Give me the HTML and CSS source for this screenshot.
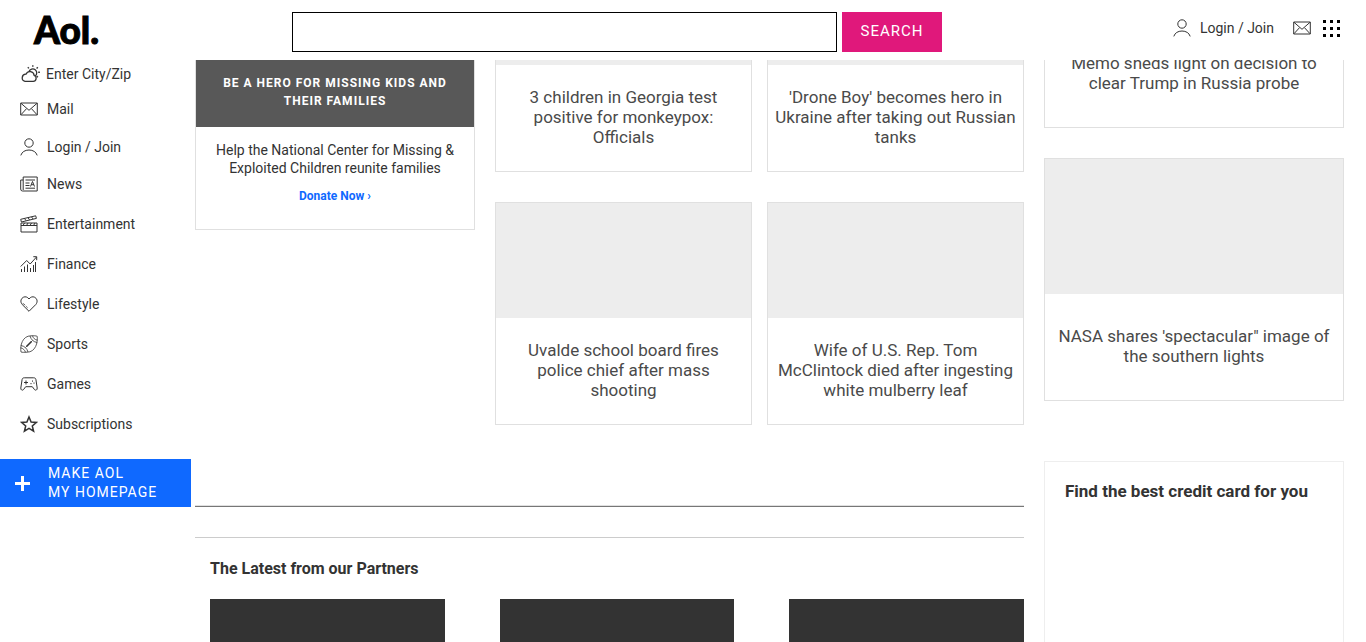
FILE: index.html
```html
<!DOCTYPE html>
<html lang="en">
<head>
<meta charset="utf-8">
<title>Aol.</title>
<link rel="stylesheet" href="styles.css">
</head>
<body>
<svg class="sprite" aria-hidden="true">
  <symbol id="i-user" viewBox="0 0 18 18"><circle cx="9" cy="5" r="4.2"/><path d="M.8 17.4c1-3.400 4.200-5.400 8.200-5.400s7.200 2 8.200 5.400"/></symbol>
  <symbol id="i-mail" viewBox="0 0 18 14"><path d="M.7 1h16.600v12H.7zM1 1.300l8 7 8-7M1 12.700l5.500-6M17 12.700l-5.500-6"/></symbol>
</svg>
<header class="header">
  <a class="logo" href="#">Aol.</a>
  <form class="search" role="search">
    <input class="search-box" type="text" aria-label="Search the web">
    <button class="search-button" type="button">SEARCH</button>
  </form>
  <div class="account">
    <a class="account-link" href="#"><svg class="icon-user"><use href="#i-user"/></svg>Login / Join</a>
    <a class="account-mail" href="#" aria-label="Mail"><svg class="icon-mail"><use href="#i-mail"/></svg></a>
    <button class="apps" type="button" aria-label="Apps"><svg class="icon-apps" viewBox="0 0 17 17"><path d="M0 0h3v3H0zM7 0h3v3H7zM14 0h3v3h-3zM0 7h3v3H0zM7 7h3v3H7zM14 7h3v3h-3zM0 14h3v3H0zM7 14h3v3H7zM14 14h3v3h-3z"/></svg></button>
  </div>
</header>
<div class="page">
  <aside class="sidebar">
    <nav class="menu">
      <a class="item weather" href="#"><svg class="icon-weather" viewBox="0 0 20 18"><path d="M5 16.300h8.200a3 3 0 0 0 1-5.800 4.300 4.300 0 0 0-8.200-1.300 3.600 3.600 0 0 0-1 7.100zM9 6.500a4 4 0 1 1 6 4.700" stroke-width="1.300"/><path d="M12.800.2v1.600M7.800 2.200l1.100 1.200M17.800 2.200l-1.200 1.200M18.200 7.300h1.700M16.600 11l1.300 1.200" stroke-width="1.400"/></svg>Enter City/Zip</a>
      <a class="item mail" href="#"><svg class="icon-mail"><use href="#i-mail"/></svg>Mail</a>
      <a class="item login" href="#"><svg class="icon-user"><use href="#i-user"/></svg>Login / Join</a>
      <a class="item" href="#"><svg class="icon" viewBox="0 0 18 18"><path d="M3.200 2h14v14H2.500Q.7 16 .7 14V5h2.500zM3.200 5v10M5.500 5h9.500M5.500 8h4M5.500 10.500h4M5.500 13.200h9.500M10.500 11.500l2-5 2 5M11.300 9.700h2.500"/></svg>News</a>
      <a class="item" href="#"><svg class="icon" viewBox="0 0 18 18"><path d="M1 8h16v9H1zM1 10.500h16M3 10.500l1.500-2.500M6.500 10.500L8 8M10 10.500l1.500-2.500M13.500 10.500L15 8M.7 4.300L15.700.8l.7 2.600L1.400 7zM4.500 3.500l1.600 2.200M8 2.700l1.600 2.200M11.500 1.900l1.600 2.100"/></svg>Entertainment</a>
      <a class="item" href="#"><svg class="icon" viewBox="0 0 18 18"><path d="M.7 11.500l6-6 3.500 3.500 6.300-7M13.300 1.700h3.400v3.500M1.500 14v3M4.500 11.500V17M7.500 9.500V17M10.500 13v4M13.500 10v7M15.500 7v10"/></svg>Finance</a>
      <a class="item" href="#"><svg class="icon" viewBox="0 0 18 18"><path d="M9 16.300L2.200 9.500C-2 4.500 5-1.500 9 4c4-5.500 11 .5 6.800 5.500zM3 8.300l2 2M6.300 11.500l1.200 1.200"/></svg>Lifestyle</a>
      <a class="item" href="#"><svg class="icon" viewBox="0 0 18 18"><path d="M1 17C-.2 10.500 2.500.8 11 .8c3-.2 5 0 6.200.5C18 7.500 15.500 17.200 7 17.200c-3 .2-5 .2-6-.2zM10 1c1 3.500 3.500 6 7.200 6.500M12.500.8c.6 2.200 2.200 3.800 4.800 4.400M.8 10.500c3.800.5 6.200 3 7.200 6.500M.7 12.800c2.500.7 4 2.200 4.800 4.400M5.500 12.500l7-7" stroke-width=".8"/><path d="M6.500 11.500l5-5" stroke-width="1.600"/></svg>Sports</a>
      <a class="item" href="#"><svg class="icon" viewBox="0 0 18 18"><path d="M4.300 2.800h9.400c1.400 0 2 .7 2.200 1.700l1.300 8.500c.2 2-1.600 2.800-2.700 1.600l-2.200-2.900H5.700l-2.200 2.900c-1.100 1.200-2.900.4-2.700-1.600L2.100 4.500c.2-1 .8-1.700 2.200-1.700zM4 7.500h4M6 5.500v4M11 8v1.200M12.500 5.500v1.200M14 7.500v1.200"/></svg>Games</a>
      <a class="item" href="#"><svg class="icon" viewBox="0 0 18 18"><path d="M9 2l2.100 5 5.300.4-4.100 3.500 1.300 5.300L9 13.400l-4.600 2.800 1.300-5.300-4.100-3.500L6.900 7z" stroke-width="1.500"/></svg>Subscriptions</a>
    </nav>
    <button class="homepage" type="button"><svg class="icon-plus" viewBox="0 0 15 15"><path d="M6 0h3v6h6v3H9v6H6V9H0V6h6z"/></svg><span>MAKE AOL<br>MY HOMEPAGE</span></button>
  </aside>
  <main class="main">
    <div class="feed">
      <section class="hero">
        <h2 class="hero-title">BE A HERO FOR MISSING KIDS AND THEIR FAMILIES</h2>
        <p class="hero-text">Help the National Center for Missing &amp; Exploited Children reunite families</p>
        <a class="hero-link" href="#">Donate Now ›</a>
      </section>
      <div class="stories">
        <article class="card"><div class="thumb thumb-short"></div><a class="headline" href="#">3 children in Georgia test positive for monkeypox:<br>Officials</a></article>
        <article class="card"><div class="thumb thumb-short"></div><a class="headline" href="#">'Drone Boy' becomes hero in Ukraine after taking out Russian tanks</a></article>
        <article class="card"><div class="thumb"></div><a class="headline" href="#">Uvalde school board fires<br>police chief after mass<br>shooting</a></article>
        <article class="card"><div class="thumb"></div><a class="headline" href="#">Wife of U.S. Rep. Tom McClintock died after ingesting white mulberry leaf</a></article>
      </div>
    </div>
    <section class="partners">
      <h2 class="partners-title">The Latest from our Partners</h2>
      <div class="tiles"><div class="tile"></div><div class="tile"></div><div class="tile"></div></div>
    </section>
  </main>
  <aside class="rail">
    <article class="card"><a class="headline headline-first" href="#">Memo sheds light on decision to clear Trump in Russia probe</a></article>
    <article class="card"><div class="thumb thumb-rail"></div><a class="headline headline-rail" href="#">NASA shares 'spectacular" image of the southern lights</a></article>
    <section class="offer"><h2 class="offer-title">Find the best credit card for you</h2></section>
  </aside>
</div>
</body>
</html>
```
FILE: styles.css
```css
* { box-sizing: border-box; }
body { margin: 0; background: #fff; color: #333; font: 14px/18px Roboto, "Liberation Sans", sans-serif; }
a { color: inherit; text-decoration: none; }
h2, p { margin: 0; }
button { border: 0; padding: 0; font: inherit; cursor: pointer; }
svg { flex: none; fill: none; stroke: #333; stroke-width: 1; }
.sprite { display: none; }

.header { position: fixed; top: 0; left: 0; right: 0; z-index: 2; display: flex; align-items: center; height: 60px; padding: 0 26px 0 34px; background: #fff; }
.logo { flex: none; width: 258px; color: #000; font: 900 37px/40px Lato, sans-serif; -webkit-text-stroke: 1px #000; }
.search { display: flex; flex: 0 1 650px; gap: 5px; height: 40px; margin-top: 4px; }
.search-box { flex: 1; min-width: 0; padding: 0 10px; border: 1px solid #000; border-radius: 0; font: inherit; font-size: 16px; }
.search-button { width: 100px; padding-bottom: 2px; background: #e0187b; color: #fff; font-size: 15px; letter-spacing: 1px; }
.account { display: flex; align-items: center; margin-left: auto; padding-bottom: 4px; }
.account-link { display: flex; align-items: center; gap: 9px; margin-right: 19px; }
.account-mail { display: flex; margin-right: 12px; }
.apps { display: flex; background: none; }
.icon-user, .icon { width: 18px; height: 18px; }
.icon-mail { width: 18px; height: 14px; }
.icon-weather { width: 20px; height: 18px; }
.icon-apps { width: 17px; height: 17px; fill: #000; stroke: none; }
.icon-plus { width: 15px; height: 15px; fill: #fff; stroke: none; }

.page { display: grid; grid-template-columns: 195px minmax(0, 1fr) 320px; min-height: 100vh; padding-right: 22px; }
.sidebar { padding-top: 60px; }
.menu { display: flex; flex-direction: column; }
.item { display: flex; align-items: center; gap: 9px; height: 40px; padding-left: 20px; }
.weather { gap: 6px; height: 28px; }
.mail { height: 42px; }
.login { height: 34px; }
.homepage { display: flex; align-items: center; gap: 18px; width: 191px; height: 48px; margin-top: 15px; padding-left: 15px; background: #0f69ff; color: #fff; line-height: 19px; letter-spacing: 1px; text-align: left; }

.main { display: flex; flex-direction: column; }
.feed { display: grid; grid-template-columns: 280px minmax(0, 1fr); gap: 20px; align-items: start; padding-bottom: 81px; border-bottom: 1px solid #777; box-shadow: inset 0 -1px #e0e0e0; }
.hero { padding-bottom: 24px; border: 1px solid #e0e0e0; border-top: 0; text-align: center; }
.hero-title { padding: 74px 20px 17px; background: #585858; color: #fff; font-size: 12px; line-height: 18px; letter-spacing: 1px; }
.hero-text { padding: 14px 20px 10px; }
.hero-link { display: block; color: #0f69ff; font-size: 12px; font-weight: 700; }
.stories { display: grid; grid-template-columns: 1fr 1fr; gap: 30px 15px; }
.card { border: 1px solid #e0e0e0; }
.thumb { height: 115px; background: #ededed; }
.thumb-short { height: 64px; }
.thumb-rail { height: 135px; }
.headline { display: block; padding: 22px 6px 24px; color: #4a4a4a; font-size: 17px; line-height: 20px; text-align: center; }
.headline-first { padding: 52px 10px 34px; }
.headline-rail { padding: 32px 10px 34px; }
.partners { display: flex; flex: 1; flex-direction: column; margin-top: 30px; padding: 21px 0 0 15px; border-top: 1px solid #ccc; }
.partners-title { font-size: 16px; line-height: 20px; }
.tiles { display: grid; grid-template-columns: repeat(3, 1fr); flex: 1; gap: 55px; margin-top: 20px; }
.tile { background: #333; }

.rail { display: flex; flex-direction: column; gap: 30px; margin-left: 20px; }
.offer { flex: 1; margin-top: 30px; padding: 19px 20px; border: 1px solid #eee; border-bottom: 0; }
.offer-title { font-size: 17px; line-height: 20px; }
```
